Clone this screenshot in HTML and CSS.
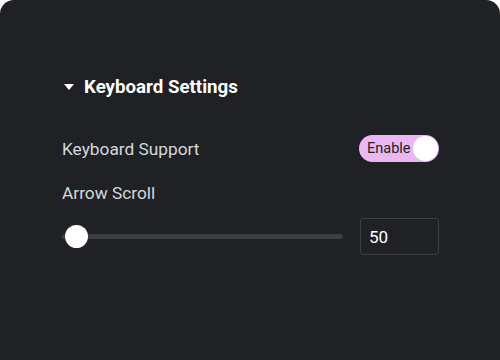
FILE: index.html
```html
<!DOCTYPE html>
<html lang="en">
<head>
    <meta charset="UTF-8">
    <meta name="viewport" content="width=device-width, initial-scale=1.0">
    <title>Keyboard Settings</title>
    <link rel="stylesheet" href="styles.css">
</head>
<body>
    <div class="panel">
        <div class="section-title">
            <span class="caret"></span>
            <span>Keyboard Settings</span>
        </div>

        <div class="row">
            <span class="label">Keyboard Support</span>
            <div class="switch">
                <span class="switch-text">Enable</span>
                <span class="knob"></span>
            </div>
        </div>

        <div class="label arrow-label">Arrow Scroll</div>
        <div class="slider-row">
            <div class="slider">
                <span class="thumb"></span>
            </div>
            <div class="number-box">50</div>
        </div>
    </div>
</body>
</html>
```

FILE: styles.css
```css
body {
    margin: 0;
    background-color: #ffffff;
    font-family: Roboto, "Liberation Sans", sans-serif;
}
.panel {
    width: 500px;
    height: 360px;
    box-sizing: border-box;
    background-color: #202125;
    border-radius: 14px 14px 0 0;
    padding: 76px 61px 0 62px;
}

/* Encabezado */
.section-title {
    display: flex;
    align-items: center;
    gap: 10px;
    color: #ffffff;
    font-size: 18.7px;
    font-weight: bold;
    height: 22px;
    padding-left: 2px;
}
.caret {
    width: 0;
    height: 0;
    border-left: 5px solid transparent;
    border-right: 5px solid transparent;
    border-top: 6px solid #ffffff;
}

.label {
    color: #d5d8dc;
    font-size: 17.3px;
}
.row {
    display: flex;
    justify-content: space-between;
    align-items: center;
    margin-top: 37px;
}

/* Interruptor */
.switch {
    position: relative;
    width: 80px;
    height: 27px;
    box-sizing: border-box;
    border-radius: 14px;
    background-color: #e9b8f2;
    display: flex;
    align-items: center;
    padding-left: 8px;
}
.switch-text {
    color: #222222;
    font-size: 14.5px;
}
.knob {
    position: absolute;
    right: 1px;
    top: 1px;
    width: 25px;
    height: 25px;
    border-radius: 50%;
    background-color: #ffffff;
}

.arrow-label {
    margin-top: 21px;
}

/* Deslizador */
.slider-row {
    display: flex;
    align-items: center;
    gap: 17px;
    margin-top: 15px;
}
.slider {
    position: relative;
    flex: 1;
    height: 5px;
    border-radius: 3px;
    background-color: #3d3f44;
}
.thumb {
    position: absolute;
    left: 3px;
    top: -9px;
    width: 23px;
    height: 23px;
    border-radius: 50%;
    background-color: #ffffff;
}
.number-box {
    width: 79px;
    height: 37px;
    box-sizing: border-box;
    border: 1px solid #3d3f44;
    border-radius: 3px;
    color: #ffffff;
    font-size: 17px;
    display: flex;
    align-items: center;
    padding-left: 8px;
}
```
